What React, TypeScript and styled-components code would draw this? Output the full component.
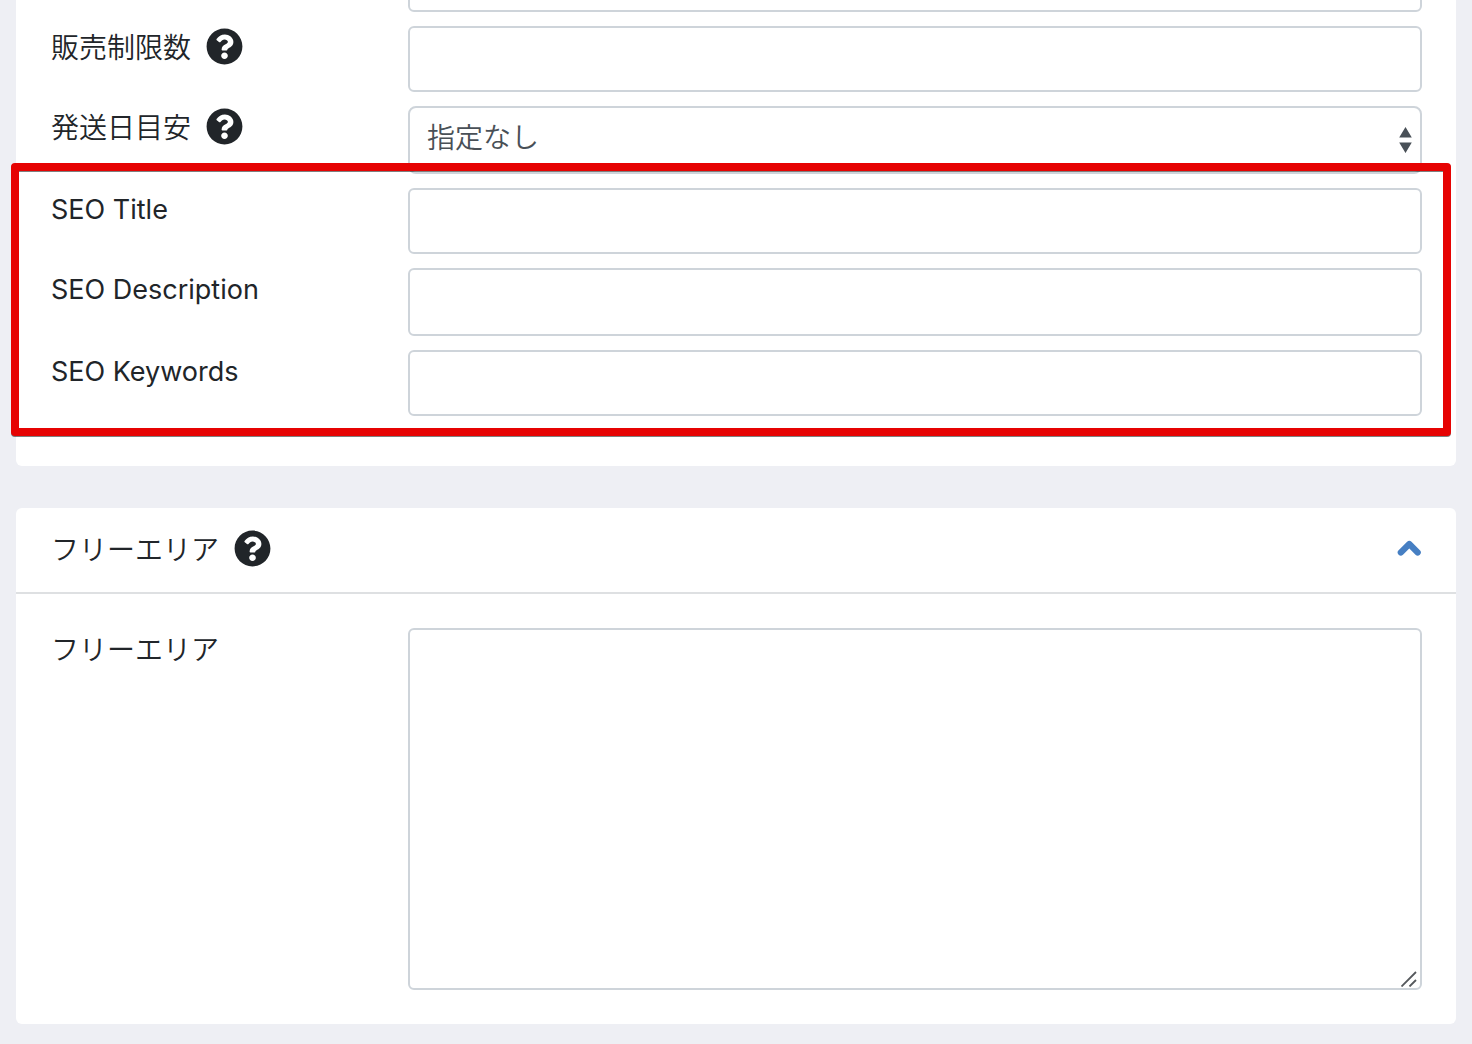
import React, { useId, useState } from "react";
import styled, { createGlobalStyle } from "styled-components";
import { FaQuestionCircle } from "react-icons/fa";

const GlobalStyle = createGlobalStyle`
  *, *::before, *::after { box-sizing: border-box; }
  html { background: #eeeff4; }
  body {
    margin: 0;
    color: #212529;
    font-family: Inter, "Noto Sans CJK JP", sans-serif;
    font-size: 28px;
    font-weight: 350;
    line-height: 42px;
    overflow-x: hidden;
  }
`;

const Page = styled.main`
  display: flex;
  flex-direction: column;
  gap: 42px;
  padding: 0 16px 20px;
  overflow: hidden;
`;

const Card = styled.section`
  background: #fff;
  border-radius: 6px;
`;

const ScrolledCard = styled(Card)`
  margin-top: -54px;
`;

const CardHeader = styled.header`
  display: flex;
  align-items: center;
  justify-content: space-between;
  height: 86px;
  padding: 0 35px 4px;
  border-bottom: 2px solid #dee0e2;
`;

const FieldList = styled.div`
  display: flex;
  flex-direction: column;
  gap: 14px;
  padding: 0 34px 50px 35px;
`;

const CardBody = styled.div`
  padding: 34px 34px 34px 35px;
`;

const Highlight = styled.div`
  position: relative;
  display: flex;
  flex-direction: column;
  gap: 14px;

  &::after {
    content: "";
    position: absolute;
    inset: -25px -29px -20px -40px;
    border: 8px solid #e60303;
    border-radius: 4px;
    filter: drop-shadow(0 1px 0 rgba(0, 0, 0, 0.5));
    pointer-events: none;
  }
`;

const Row = styled.div`
  display: grid;
  grid-template-columns: 357px minmax(0, 1fr);
  align-items: start;
`;

const LabelCell = styled.div`
  display: flex;
  align-items: center;
  gap: 15px;
  height: 40px;
`;

const Label = styled.label<{ $latin?: boolean }>`
  padding-top: 4px;
  font-size: ${(p) => (p.$latin ? 27 : 28)}px;
  font-weight: ${(p) => (p.$latin ? 400 : 350)};
`;

const CardTitle = styled.h2`
  margin: 0;
  padding-top: 4px;
  font-size: 28px;
  font-weight: 350;
  line-height: 42px;
`;

const HelpButton = styled.button`
  display: flex;
  padding: 0;
  border: 0;
  background: none;
  color: #212529;
  font-size: 37px;
  cursor: pointer;
`;

const ToggleButton = styled.button`
  display: flex;
  padding: 0;
  border: 0;
  background: none;
  color: #467fc3;
  cursor: pointer;
`;

const Input = styled.input<{ $tall?: boolean }>`
  display: block;
  width: 100%;
  height: ${(p) => (p.$tall ? 68 : 66)}px;
  padding: 0 18px;
  border: 2px solid #ced4da;
  border-radius: 6px;
  background: #fff;
  color: #495057;
  font: inherit;
`;

const SelectBox = styled.div`
  position: relative;
`;

const Select = styled.select`
  display: block;
  width: 100%;
  height: 68px;
  padding: 0 48px 4px 17px;
  border: 2px solid #ced4da;
  border-radius: 8px;
  background: #fff;
  color: #495057;
  font: inherit;
  appearance: none;
`;

const SelectArrows = styled.svg`
  position: absolute;
  top: 21px;
  right: 10px;
  pointer-events: none;
`;

const AreaBox = styled.div`
  position: relative;
`;

const TextArea = styled.textarea`
  display: block;
  width: 100%;
  height: 362px;
  padding: 10px 18px;
  border: 2px solid #ced4da;
  border-radius: 6px;
  background: #fff;
  color: #495057;
  font: inherit;
  resize: vertical;

  &::-webkit-resizer {
    background: transparent;
  }
`;

const Grip = styled.svg`
  position: absolute;
  right: 5px;
  bottom: 3px;
  pointer-events: none;
`;

function Help({ topic }: { topic: string }) {
  return (
    <HelpButton type="button" aria-label={topic}>
      <FaQuestionCircle />
    </HelpButton>
  );
}

function TextRow({ label, help, latin, tall }: { label: string; help?: boolean; latin?: boolean; tall?: boolean }) {
  const id = useId();
  return (
    <Row>
      <LabelCell>
        <Label htmlFor={id} $latin={latin}>{label}</Label>
        {help && <Help topic={label} />}
      </LabelCell>
      <Input id={id} type="text" $tall={tall} />
    </Row>
  );
}

function ShippingRow() {
  const id = useId();
  return (
    <Row>
      <LabelCell>
        <Label htmlFor={id}>発送日目安</Label>
        <Help topic="発送日目安" />
      </LabelCell>
      <SelectBox>
        <Select id={id}>
          <option>指定なし</option>
        </Select>
        <SelectArrows width="13" height="26" viewBox="0 0 13 26" fill="#495057" aria-hidden="true">
          <path d="M6.5 0 12.8 10.6H.2zM6.5 26 12.8 15.4H.2z" />
        </SelectArrows>
      </SelectBox>
    </Row>
  );
}

function FreeArea() {
  const id = useId();
  const [open, setOpen] = useState(true);
  return (
    <Card>
      <CardHeader>
        <LabelCell>
          <CardTitle>フリーエリア</CardTitle>
          <Help topic="フリーエリア" />
        </LabelCell>
        <ToggleButton type="button" aria-label="フリーエリア" aria-expanded={open} onClick={() => setOpen(!open)}>
          <svg width="24" height="16" viewBox="0 0 24 16" fill="none" stroke="currentColor" strokeWidth="6.2" strokeLinecap="round" strokeLinejoin="round">
            <path d={open ? "M3.8 12.5 12.3 4l8.4 8.5" : "M3.8 3.5 12.3 12l8.4-8.5"} />
          </svg>
        </ToggleButton>
      </CardHeader>
      {open && (
        <CardBody>
          <Row>
            <LabelCell>
              <Label htmlFor={id}>フリーエリア</Label>
            </LabelCell>
            <AreaBox>
              <TextArea id={id} />
              <Grip width="16" height="16" viewBox="0 0 16 16" stroke="#55585c" strokeWidth="1.8" aria-hidden="true">
                <path d="M.5 15.5 15 1M8.5 15.5l6.5-6.5" />
              </Grip>
            </AreaBox>
          </Row>
        </CardBody>
      )}
    </Card>
  );
}

export default function App() {
  return (
    <>
      <GlobalStyle />
      <Page>
        <ScrolledCard>
          <FieldList>
            <Row>
              <LabelCell />
              <Input type="text" />
            </Row>
            <TextRow label="販売制限数" help />
            <ShippingRow />
            <Highlight>
              <TextRow label="SEO Title" latin />
              <TextRow label="SEO Description" latin tall />
              <TextRow label="SEO Keywords" latin />
            </Highlight>
          </FieldList>
        </ScrolledCard>
        <FreeArea />
      </Page>
    </>
  );
}
